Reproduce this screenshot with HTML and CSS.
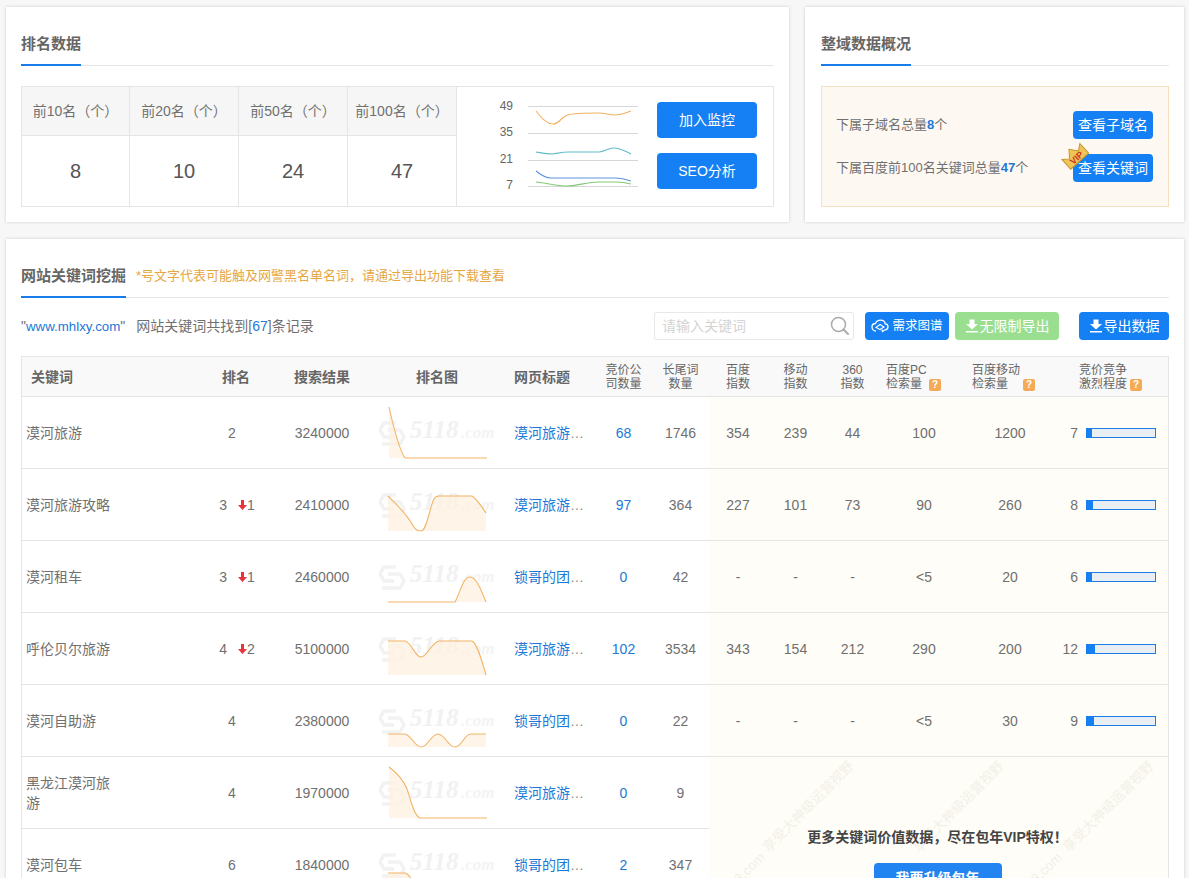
FILE: index.html
```html
<!DOCTYPE html>
<html lang="zh-CN">
<head>
<meta charset="utf-8">
<title>网站关键词挖掘</title>
<link rel="stylesheet" href="styles.css">
</head>
<body>
<div class="top">
  <section class="card card-rank">
    <div class="title-row"><h2 class="title">排名数据</h2></div>
    <div class="rank-box">
      <div class="stats">
        <div class="stat-head">前10名（个）</div><div class="stat-head">前20名（个）</div><div class="stat-head">前50名（个）</div><div class="stat-head">前100名（个）</div>
        <div class="stat-val">8</div><div class="stat-val">10</div><div class="stat-val">24</div><div class="stat-val">47</div>
      </div>
      <svg class="trend" width="190" height="119" viewBox="0 0 190 119">
        <g class="grid-lines"><path d="M71 19.500H181M71 46.500H181M71 73.500H181M71 99.500H181"/></g>
        <text class="axis" x="56" y="23" text-anchor="end">49</text>
        <text class="axis" x="56" y="49" text-anchor="end">35</text>
        <text class="axis" x="56" y="76" text-anchor="end">21</text>
        <text class="axis" x="56" y="102" text-anchor="end">7</text>
        <path class="ln" stroke="#f3b062" d="M79 24C84 30 89 37 96 37C104 37 104 27 116 27C125 26 135 26 142 26C148 26 152 28 158 28C164 28 168 26 174 24"/>
        <path class="ln" stroke="#62bdc9" d="M79 65C85 66 90 67 96 67C102 66 106 65 112 65L142 65C148 65 150 61 157 61C163 61 168 64 174 67"/>
        <path class="ln" stroke="#5c93dc" d="M79 84C84 88 88 91 94 91L158 91C164 91 168 92 174 94"/>
        <path class="ln" stroke="#82c878" d="M79 95C90 96 100 99 110 99C120 99 130 95 142 95L160 95C165 95 170 96 174 97"/>
      </svg>
      <div class="rank-actions">
        <a class="btn btn-big">加入监控</a>
        <a class="btn btn-big">SEO分析</a>
      </div>
    </div>
  </section>
  <section class="card card-domain">
    <div class="title-row"><h2 class="title">整域数据概况</h2></div>
    <div class="domain-box">
      <div class="domain-row"><span>下属子域名总量<b class="num">8</b>个</span><a class="btn btn-mid">查看子域名</a></div>
      <div class="domain-row"><span>下属百度前100名关键词总量<b class="num">47</b>个</span>
        <a class="btn btn-mid btn-vip">查看关键词
          <svg class="vip" width="28" height="28" viewBox="0 0 28 28">
            <g transform="rotate(-42 14 14)">
              <path d="M2 8L8 12.500L14 5L20 12.500L26 8L26 21L2 21Z" fill="#f0c557" stroke="#c9922e" stroke-width="1"/>
              <text x="14" y="19.500" text-anchor="middle" class="vip-text">VIP</text>
            </g>
          </svg>
        </a>
      </div>
    </div>
  </section>
</div>

<section class="card card-words">
  <div class="title-row">
    <h2 class="title">网站关键词挖掘</h2>
    <span class="note">*号文字代表可能触及网警黑名单名词，请通过导出功能下载查看</span>
  </div>
  <div class="toolbar">
    <div class="info">"<a class="link site">www.mhlxy.com</a>"<span class="info-text">网站关键词共找到[<a class="link">67</a>]条记录</span></div>
    <div class="search">
      <span class="placeholder">请输入关键词</span>
      <svg width="20" height="20" viewBox="0 0 20 20"><circle cx="8.500" cy="8.500" r="7" fill="none" stroke="#aaa" stroke-width="1.500"/><path d="M13.500 13.500L18 18" stroke="#aaa" stroke-width="2" stroke-linecap="round"/></svg>
    </div>
    <a class="btn btn-tool btn-map">
      <svg width="18" height="14" viewBox="0 0 18 14"><path d="M5 12C2.500 12 1 10.300 1 8C1 5.800 2.500 4.500 4.500 4.500C5.300 2.300 7.200 1.200 9.500 1.200C12 1.200 13.800 2.600 14.300 4.800C16 5 17 6.200 17 7.800C17 9.500 15.700 10.800 14 10.800L11.500 12.500L11 10.800" fill="none" stroke="#fff" stroke-width="1.300"/><path d="M5 8.500L9 5.500L13 8L9 10.500Z" fill="none" stroke="#fff" stroke-width="1.100"/></svg>
      <span class="sm">需求图谱</span></a>
    <a class="btn btn-tool btn-green">
      <svg class="dl" width="14" height="14" viewBox="0 0 14 14"><path d="M4.500 0.500H9.500V5H13L7 10.500L1 5H4.500Z M1 12H13V13.500H1Z" fill="#fff"/></svg>无限制导出</a>
    <a class="btn btn-tool btn-export">
      <svg class="dl" width="14" height="14" viewBox="0 0 14 14"><path d="M4.500 0.500H9.500V5H13L7 10.500L1 5H4.500Z M1 12H13V13.500H1Z" fill="#fff"/></svg>导出数据</a>
  </div>

  <table class="words">
    <colgroup>
      <col class="c-kw"><col class="c-rk"><col class="c-res"><col class="c-chart"><col class="c-title"><col class="c-n"><col class="c-n"><col class="c-n2"><col class="c-n"><col class="c-n"><col class="c-v"><col class="c-v"><col class="c-bar">
    </colgroup>
    <thead>
      <tr>
        <th class="th-kw">关键词</th><th>排名</th><th>搜索结果</th><th>排名图</th><th class="th-title">网页标题</th>
        <th class="th-sm">竞价公<br>司数量</th><th class="th-sm">长尾词<br>数量</th><th class="th-sm">百度<br>指数</th><th class="th-sm">移动<br>指数</th><th class="th-sm">360<br>指数</th>
        <th class="th-sm th-left">百度PC<br>检索量<i class="q q-a">?</i></th>
        <th class="th-sm th-left">百度移动<br>检索量<i class="q q-b">?</i></th>
        <th class="th-sm th-left th-bar">竞价竞争<br>激烈程度<i class="q q-c">?</i></th>
      </tr>
    </thead>
    <tbody>
      <tr>
        <td class="kw">漠河旅游</td>
        <td><span class="rk">2</span><span class="rk-none"></span></td>
        <td>3240000</td>
        <td class="chart"><svg width="116" height="71" viewBox="0 0 116 71">
          <g class="wm"><path d="M17 26H5L1 33L5 40H15M9 33H21L25 40L21 47H3" /><text class="wm-a" x="31" y="41">5118</text><text class="wm-b" x="82" y="41">.com</text></g>
          <path class="area" d="M10 10C14 28 20 52 26 61L108 61L10 61Z"/>
          <path class="ln" stroke="#f2b366" d="M10 10C14 28 20 52 26 61L108 61"/></svg></td>
        <td class="tt"><a class="link">漠河旅游<span class="dots">…</span></a></td>
        <td><a class="link">68</a></td><td>1746</td>
        <td class="tint">354</td><td class="tint">239</td><td class="tint">44</td><td class="tint">100</td><td class="tint">1200</td>
        <td class="tint"><div class="cmp"><span class="cmp-n">7</span><span class="bar"><span class="fill" style="width:5px"></span></span></div></td>
      </tr>
      <tr>
        <td class="kw">漠河旅游攻略</td>
        <td><span class="rk">3</span><span class="down"><svg width="9" height="10" viewBox="0 0 9 10"><path d="M3 0H6V5H9L4.500 10L0 5H3Z" fill="#e8323c"/></svg>1</span></td>
        <td>2410000</td>
        <td class="chart"><svg width="116" height="71" viewBox="0 0 116 71">
          <g class="wm"><path d="M17 26H5L1 33L5 40H15M9 33H21L25 40L21 47H3" /><text class="wm-a" x="31" y="41">5118</text><text class="wm-b" x="82" y="41">.com</text></g>
          <path class="area" d="M9 27C18 36 27 44 33 55C36 61 39 62 42 62C46 62 48 52 51 42C54 31 55 27 60 27L93 27C98 30 103 38 107 44L107 62L9 62Z"/>
          <path class="ln" stroke="#f2b366" d="M9 27C18 36 27 44 33 55C36 61 39 62 42 62C46 62 48 52 51 42C54 31 55 27 60 27L93 27C98 30 103 38 107 44"/></svg></td>
        <td class="tt"><a class="link">漠河旅游<span class="dots">…</span></a></td>
        <td><a class="link">97</a></td><td>364</td>
        <td class="tint">227</td><td class="tint">101</td><td class="tint">73</td><td class="tint">90</td><td class="tint">260</td>
        <td class="tint"><div class="cmp"><span class="cmp-n">8</span><span class="bar"><span class="fill" style="width:6px"></span></span></div></td>
      </tr>
      <tr>
        <td class="kw">漠河租车</td>
        <td><span class="rk">3</span><span class="down"><svg width="9" height="10" viewBox="0 0 9 10"><path d="M3 0H6V5H9L4.500 10L0 5H3Z" fill="#e8323c"/></svg>1</span></td>
        <td>2460000</td>
        <td class="chart"><svg width="116" height="71" viewBox="0 0 116 71">
          <g class="wm"><path d="M17 26H5L1 33L5 40H15M9 33H21L25 40L21 47H3" /><text class="wm-a" x="31" y="41">5118</text><text class="wm-b" x="82" y="41">.com</text></g>
          <path class="area" d="M9 61L76 61C81 52 84 36 91 36C98 36 103 52 107 61Z"/>
          <path class="ln" stroke="#f2b366" d="M9 61L76 61C81 52 84 36 91 36C98 36 103 52 107 61"/></svg></td>
        <td class="tt"><a class="link">锁哥的团<span class="dots">…</span></a></td>
        <td><a class="link">0</a></td><td>42</td>
        <td class="tint">-</td><td class="tint">-</td><td class="tint">-</td><td class="tint">&lt;5</td><td class="tint">20</td>
        <td class="tint"><div class="cmp"><span class="cmp-n">6</span><span class="bar"><span class="fill" style="width:5px"></span></span></div></td>
      </tr>
      <tr>
        <td class="kw">呼伦贝尔旅游</td>
        <td><span class="rk">4</span><span class="down"><svg width="9" height="10" viewBox="0 0 9 10"><path d="M3 0H6V5H9L4.500 10L0 5H3Z" fill="#e8323c"/></svg>2</span></td>
        <td>5100000</td>
        <td class="chart"><svg width="116" height="71" viewBox="0 0 116 71">
          <g class="wm"><path d="M17 26H5L1 33L5 40H15M9 33H21L25 40L21 47H3" /><text class="wm-a" x="31" y="41">5118</text><text class="wm-b" x="82" y="41">.com</text></g>
          <path class="area" d="M9 28L26 28C33 30 36 44 42 44C48 44 52 30 60 28L93 28C98 30 103 48 107 62L9 62Z"/>
          <path class="ln" stroke="#f2b366" d="M9 28L26 28C33 30 36 44 42 44C48 44 52 30 60 28L93 28C98 30 103 48 107 62"/></svg></td>
        <td class="tt"><a class="link">漠河旅游<span class="dots">…</span></a></td>
        <td><a class="link">102</a></td><td>3534</td>
        <td class="tint">343</td><td class="tint">154</td><td class="tint">212</td><td class="tint">290</td><td class="tint">200</td>
        <td class="tint"><div class="cmp"><span class="cmp-n">12</span><span class="bar"><span class="fill" style="width:8px"></span></span></div></td>
      </tr>
      <tr>
        <td class="kw">漠河自助游</td>
        <td><span class="rk">4</span><span class="rk-none"></span></td>
        <td>2380000</td>
        <td class="chart"><svg width="116" height="71" viewBox="0 0 116 71">
          <g class="wm"><path d="M17 26H5L1 33L5 40H15M9 33H21L25 40L21 47H3" /><text class="wm-a" x="31" y="41">5118</text><text class="wm-b" x="82" y="41">.com</text></g>
          <path class="area" d="M9 49L26 49C33 51 36 62 42 62C49 62 52 49 59 49C66 49 69 62 76 62C83 62 85 49 92 49L107 49L107 62L9 62Z"/>
          <path class="ln" stroke="#f2b366" d="M9 49L26 49C33 51 36 62 42 62C49 62 52 49 59 49C66 49 69 62 76 62C83 62 85 49 92 49L107 49"/></svg></td>
        <td class="tt"><a class="link">锁哥的团<span class="dots">…</span></a></td>
        <td><a class="link">0</a></td><td>22</td>
        <td class="tint">-</td><td class="tint">-</td><td class="tint">-</td><td class="tint">&lt;5</td><td class="tint">30</td>
        <td class="tint"><div class="cmp"><span class="cmp-n">9</span><span class="bar"><span class="fill" style="width:7px"></span></span></div></td>
      </tr>
      <tr>
        <td class="kw">黑龙江漠河旅游</td>
        <td><span class="rk">4</span><span class="rk-none"></span></td>
        <td>1970000</td>
        <td class="chart"><svg width="116" height="71" viewBox="0 0 116 71">
          <g class="wm"><path d="M17 26H5L1 33L5 40H15M9 33H21L25 40L21 47H3" /><text class="wm-a" x="31" y="41">5118</text><text class="wm-b" x="82" y="41">.com</text></g>
          <path class="area" d="M10 10C18 16 24 22 28 32C32 44 35 58 41 61L108 61L10 61Z"/>
          <path class="ln" stroke="#f2b366" d="M10 10C18 16 24 22 28 32C32 44 35 58 41 61L108 61"/></svg></td>
        <td class="tt"><a class="link">漠河旅游<span class="dots">…</span></a></td>
        <td><a class="link">0</a></td><td>9</td>
        <td class="upsell" colspan="6" rowspan="2">
          <div class="upsell-in">
            <span class="mark m1">享受大神级运营视野</span><span class="mark m2">享受大神级运营视野</span><span class="mark m3">享受大神级运营视野</span>
            <span class="mark m4">5118.com</span><span class="mark m5">5118.com</span>
            <p class="upsell-text">更多关键词价值数据，尽在包年VIP特权！</p>
            <a class="btn btn-up">我要升级包年</a>
          </div>
        </td>
      </tr>
      <tr>
        <td class="kw">漠河包车</td>
        <td><span class="rk">6</span><span class="rk-none"></span></td>
        <td>1840000</td>
        <td class="chart"><svg width="116" height="71" viewBox="0 0 116 71">
          <g class="wm"><path d="M17 26H5L1 33L5 40H15M9 33H21L25 40L21 47H3" /><text class="wm-a" x="31" y="41">5118</text><text class="wm-b" x="82" y="41">.com</text></g>
          <path class="area" d="M9 44L26 44C33 46 36 60 42 71L9 71Z"/>
          <path class="ln" stroke="#f2b366" d="M9 44L26 44C33 46 36 60 42 71"/></svg></td>
        <td class="tt"><a class="link">锁哥的团<span class="dots">…</span></a></td>
        <td><a class="link">2</a></td><td>347</td>
      </tr>
    </tbody>
  </table>
</section>
</body>
</html>
```

FILE: styles.css
```css
* { box-sizing: border-box; }
html, body { height: 878px; overflow: hidden; }
body {
  margin: 0;
  padding: 7px 5px 0 6px;
  background: #f7f7f7;
  color: #707070;
  font: 14px/20px "Liberation Sans", "Noto Sans CJK SC", sans-serif;
}
h2, p { margin: 0; }
a { text-decoration: none; }
.link { color: #2179d6; }
.top { display: flex; gap: 16px; }
.card {
  background: #fff;
  padding: 0 15px;
  box-shadow: 0 0 3px rgba(0, 0, 0, .18);
}
.card-rank { width: 783px; height: 215px; }
.card-domain { width: 379px; height: 215px; padding-left: 16px; }
.card-words { margin-top: 17px; height: 639px; overflow: hidden; }

.title-row {
  display: flex;
  align-items: flex-end;
  height: 59px;
  border-bottom: 1px solid #e6e6e6;
}
.title {
  height: 59px;
  margin-bottom: -1px;
  padding-top: 25px;
  border-bottom: 2px solid #1a7ce8;
  font-size: 15px;
  line-height: 24px;
  font-weight: 700;
  color: #666;
}
.note {
  align-self: flex-start;
  margin: 25px 0 0 10px;
  font-size: 13px;
  line-height: 24px;
  color: #e6a642;
}

.rank-box {
  display: flex;
  justify-content: space-between;
  height: 121px;
  margin-top: 20px;
  border: 1px solid #e5e5e5;
}
.stats {
  display: grid;
  grid-template-columns: 108px 109px 109px 109px;
  grid-template-rows: 49px 70px;
}
.stat-head, .stat-val {
  display: flex;
  align-items: center;
  justify-content: center;
  border-right: 1px solid #e5e5e5;
}
.stat-head {
  background: #f6f6f6;
  border-bottom: 1px solid #e5e5e5;
  white-space: nowrap;
}
.stat-val { font-size: 20px; color: #555; }
.trend { display: block; flex: none; margin-right: auto; }
.grid-lines path { stroke: #d6d6d6; stroke-width: 1; fill: none; }
.axis { font-size: 12px; fill: #666; }
.ln { fill: none; stroke-width: 1.100; }
.rank-actions {
  display: flex;
  flex-direction: column;
  gap: 15px;
  padding: 15px 16px 0 0;
}
.btn {
  display: inline-flex;
  align-items: center;
  justify-content: center;
  background: #1580f3;
  color: #fff;
  border-radius: 4px;
  white-space: nowrap;
}
.btn-big { width: 100px; height: 36px; }

.domain-box {
  display: flex;
  flex-direction: column;
  justify-content: center;
  gap: 15px;
  height: 121px;
  margin-top: 20px;
  padding: 0 15px 0 14px;
  background: #fef8f3;
  border: 1px solid #f5dfbf;
}
.domain-row { display: flex; align-items: center; justify-content: space-between; height: 28px; font-size: 13px; }
.num { color: #2179d6; font-weight: 700; }
.btn-mid { width: 80px; height: 28px; font-size: 14px; position: relative; }
.vip { position: absolute; left: -12px; top: -12px; }
.vip-text { font: 700 9px "Liberation Sans", sans-serif; fill: #c8321e; }

.toolbar { display: flex; align-items: center; height: 28px; margin-top: 14px; }
.site { font-size: 13.300px; }
.info-text { margin-left: 11px; }
.search {
  display: flex;
  align-items: center;
  justify-content: space-between;
  width: 200px;
  height: 28px;
  margin-left: auto;
  padding: 0 3px 0 7px;
  border: 1px solid #e8e8e8;
  border-radius: 2px;
}
.placeholder { color: #d4d4d4; }
.btn-tool { height: 28px; }
.btn-map { width: 84px; margin-left: 11px; gap: 3px; }
.sm { font-size: 12.500px; }
.btn-green { width: 104px; margin-left: 6px; background: #9adf8f; }
.btn-export { width: 90px; margin-left: 20px; }
.dl { margin-right: 1px; }

.words {
  width: 1148px;
  margin-top: 16px;
  table-layout: fixed;
  border-collapse: separate;
  border-spacing: 0;
  border: 1px solid #e5e5e5;
  border-bottom: 0;
}
.c-kw { width: 168px; } .c-rk { width: 92px; } .c-res { width: 80px; }
.c-chart { width: 150px; } .c-title { width: 83px; } .c-n { width: 57px; }
.c-n2 { width: 58px; } .c-v { width: 86px; } .c-bar { width: 115px; }
.words th {
  height: 40px;
  padding: 0;
  background: #f9f9f9;
  border-bottom: 1px solid #e5e5e5;
  font-size: 14px;
  font-weight: 700;
  color: #666;
  text-align: center;
}
.words .th-kw { text-align: left; padding-left: 9px; }
.words .th-title { text-align: left; padding-left: 2px; }
.words .th-sm { font-size: 12px; line-height: 14px; font-weight: 400; }
.words .th-left { text-align: left; padding: 0 0 0 5px; position: relative; }
.words .th-bar { padding-left: 26px; }
.q {
  display: inline-block;
  width: 12px;
  height: 12px;
  background: #f5ab55;
  border-radius: 2px;
  color: #fff;
  font: 700 10px/12px "Liberation Sans", sans-serif;
  text-align: center;
}
.q-a { margin-left: 7px; }
.q-b { margin-left: 15px; }
.q-c { margin-left: 3px; }
.words td {
  height: 72px;
  padding: 0;
  border-bottom: 1px solid #e5e5e5;
  text-align: center;
  vertical-align: middle;
}
.words .kw { text-align: left; padding: 0 75px 0 4px; }
.rk-none { display: inline-block; width: 8px; }
.down { display: inline-block; margin: 0 -2px 0 11px; }
.words .chart { padding: 0 0 0 17px; text-align: left; }
.chart svg { display: block; }
.wm path { fill: none; stroke: #f2f2f2; stroke-width: 3.500; stroke-linejoin: round; }
.wm-a { font: italic 700 25px "Liberation Serif", serif; fill: #f1f1f1; }
.wm-b { font: italic 700 17px "Liberation Serif", serif; fill: #f3f3f3; }
.area { fill: #fdf0e0; fill-opacity: .75; }
.words .tt { padding: 0 0 0 2px; text-align: left; white-space: nowrap; }
.dots { color: #8a8a8a; }
.words .tint { background: #fffdf7; }
.cmp { display: flex; align-items: center; justify-content: flex-end; gap: 4px; padding-right: 12px; }
.bar {
  display: block;
  width: 70px;
  height: 10px;
  margin-left: 4px;
  border: 1px solid #1a7ce8;
  background: #e9eef2;
}
.fill { display: block; height: 8px; background: #1580f3; }
.words .upsell {
  padding: 0;
  background: #fffdf7;
  border-bottom: 0;
  vertical-align: top;
}
.upsell-in {
  position: relative;
  height: 143px;
  padding: 70px 2px 0 0;
  overflow: hidden;
  text-align: center;
}
.upsell-text { position: relative; font-weight: 700; color: #444; line-height: 20px; }
.btn-up { position: relative; width: 128px; height: 40px; margin-top: 16px; align-items: flex-start; padding-top: 5px; font-weight: 700; background: #2284f0; }
.mark {
  position: absolute;
  font-size: 13.500px;
  line-height: 16px;
  color: #f2f0e7;
  white-space: nowrap;
  transform: rotate(-45deg);
}
.m1 { left: 39px; top: 42px; }
.m2 { left: 189px; top: 42px; }
.m3 { left: 339px; top: 42px; }
.m4 { left: 4px; top: 111px; }
.m5 { left: 301px; top: 111px; }
```
